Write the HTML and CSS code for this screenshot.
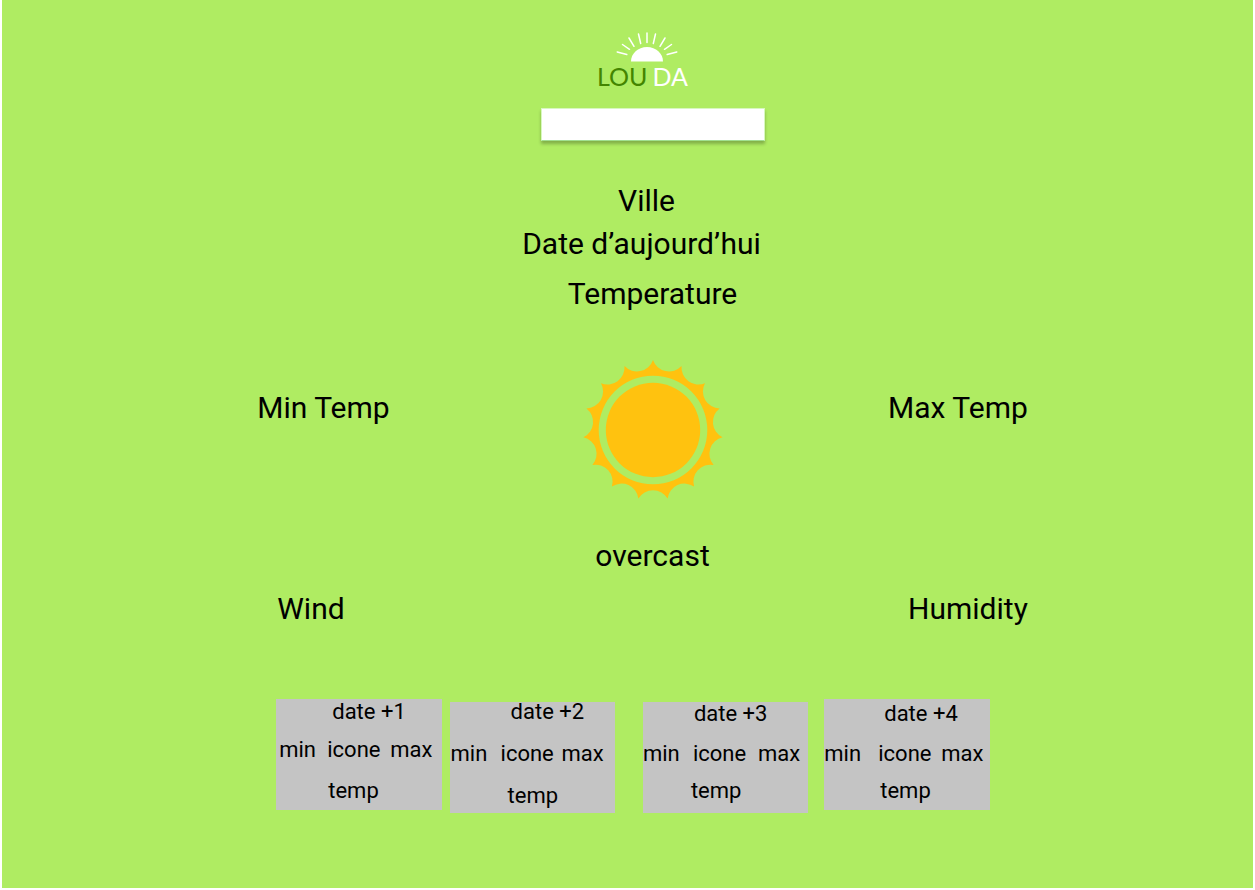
FILE: index.html
```html
<!DOCTYPE html>
<html lang="fr">
<head>
  <meta charset="utf-8">
  <meta name="viewport" content="width=device-width, initial-scale=1">
  <title>Louda</title>
  <link rel="stylesheet" href="styles.css">
</head>
<body>
  <main class="page">
    <header class="header">
      <div class="logo">
        <svg class="logo-sun" viewBox="0 0 62 30" aria-hidden="true">
          <path class="logo-disc" d="M15 29.5C15 21.5 22 15 31 15s16 6.500 16 14.500z"/>
          <path class="logo-rays" d="M31 1v9.500M22.500 2l2.200 9.500M39.500 2l-2.200 9.500M13 6l5 8.300M49 6l-5 8.300M6.500 12.500l7 4.800M55.500 12.500l-7 4.800M1.200 20l9.600 2.500M60.800 20l-9.600 2.500"/>
        </svg>
        <div class="logo-name"><span class="logo-dark">LOU</span><span class="logo-light">DA</span></div>
      </div>
      <input class="search" type="text" aria-label="Ville">
    </header>

    <section class="today">
      <h1 class="city">Ville</h1>
      <p class="date">Date d’aujourd’hui</p>
      <p class="temperature">Temperature</p>
    </section>

    <section class="conditions">
      <p class="min-temp">Min Temp</p>
      <svg class="sun" viewBox="-70 -70 140 140" aria-hidden="true">
        <path fill-rule="evenodd" d="M0-70A17 17 0 0 0 28.500-63.900A17 17 0 0 0 52-46.800A17 17 0 0 0 66.600-21.600A17 17 0 0 0 69.600 7.300A17 17 0 0 0 60.600 35A17 17 0 0 0 41.100 56.600A17 17 0 0 0 14.600 68.500A17 17 0 0 0-14.600 68.500A17 17 0 0 0-41.100 56.600A17 17 0 0 0-60.600 35A17 17 0 0 0-69.600 7.300A17 17 0 0 0-66.600-21.600A17 17 0 0 0-52-46.800A17 17 0 0 0-28.500-63.900A17 17 0 0 0 0-70zM-54.300 0A54.300 54.300 0 0 0 54.300 0A54.300 54.300 0 0 0-54.300 0z"/>
        <circle r="47.200"/>
      </svg>
      <p class="max-temp">Max Temp</p>
    </section>

    <p class="sky">overcast</p>

    <section class="air">
      <p>Wind</p>
      <p>Humidity</p>
    </section>

    <section class="forecast">
      <article class="day day-one">
        <h2 class="day-date">date +1</h2>
        <div class="day-row"><span>min</span><span>icone</span><span>max</span></div>
        <p class="day-temp">temp</p>
      </article>
      <article class="day day-two">
        <h2 class="day-date">date +2</h2>
        <div class="day-row"><span>min</span><span>icone</span><span>max</span></div>
        <p class="day-temp">temp</p>
      </article>
      <article class="day day-three">
        <h2 class="day-date">date +3</h2>
        <div class="day-row"><span>min</span><span>icone</span><span>max</span></div>
        <p class="day-temp">temp</p>
      </article>
      <article class="day day-four">
        <h2 class="day-date">date +4</h2>
        <div class="day-row"><span>min</span><span>icone</span><span>max</span></div>
        <p class="day-temp">temp</p>
      </article>
    </section>
  </main>
</body>
</html>
```
FILE: styles.css
```css
* {
  box-sizing: border-box;
}

body {
  margin: 0;
  padding: 0 2px 2px;
  background: #fff;
  color: #000;
  font: 400 30px/36px Roboto, sans-serif;
}

h1,
h2,
p {
  margin: 0;
  font: inherit;
}

.page {
  min-height: calc(100vh - 2px);
  padding: 32px 18% 48px 22%;
  background: #afec62;
}

.header,
.today {
  display: flex;
  flex-direction: column;
  align-items: center;
}

.logo {
  display: flex;
  flex-direction: column;
  align-items: center;
  padding-right: 12px;
}

.logo-sun {
  display: block;
  width: 62px;
  height: 30px;
}

.logo-disc {
  fill: #fff;
}

.logo-rays {
  fill: none;
  stroke: #fff;
  stroke-width: 1.5;
  stroke-linecap: round;
}

.logo-name {
  display: flex;
  gap: 5px;
  margin-right: 8px;
  font: 400 25px/28px Lato, sans-serif;
}

.logo-dark {
  color: #438500;
}

.logo-light {
  color: #fff;
}

.search {
  width: 224px;
  height: 33px;
  margin-top: 18px;
  padding: 0 8px;
  border: 1px solid #d8f8c0;
  border-bottom-color: #a0e090;
  border-radius: 0;
  background: #fff;
  box-shadow: 0 3px 3px rgba(0, 0, 0, 0.25);
  font: 400 16px/20px Roboto, sans-serif;
}

.today {
  margin-top: 42px;
}

.city {
  padding-right: 12px;
}

.date {
  margin-top: 7px;
  padding-right: 22px;
}

.temperature {
  margin-top: 14px;
}

.conditions {
  display: grid;
  grid-template-columns: 1fr 140px 1fr;
  margin-top: 48px;
}

.min-temp {
  margin: 30px 0 0 -20px;
}

.max-temp {
  margin-top: 30px;
  text-align: right;
}

.sun {
  display: block;
  width: 140px;
  height: 140px;
  fill: #ffc20f;
}

.sky {
  margin-top: 38px;
  text-align: center;
}

.air {
  display: flex;
  justify-content: space-between;
  margin-top: 17px;
}

.forecast {
  display: flex;
  align-items: flex-start;
  margin: 72px 0 0 -1px;
  font-size: 22px;
  line-height: 26px;
}

.day {
  flex: 0 0 22%;
  padding-bottom: 6px;
  background: #c4c4c4;
}

.day-row {
  display: grid;
}

.day-one .day-date {
  padding-left: 56px;
}

.day-one .day-row {
  grid-template-columns: 48px 63px auto;
  margin: 12px 0 15px;
  padding-left: 3px;
}

.day-one .day-temp {
  padding-left: 52px;
}

.day-two {
  margin: 3px 0 0 8px;
}

.day-two .day-date {
  margin-top: -3px;
  padding-left: 61px;
}

.day-two .day-row {
  grid-template-columns: 50px 61px auto;
  margin: 16px 0;
  padding-left: 1px;
}

.day-two .day-temp {
  padding-left: 58px;
}

.day-two,
.day-three {
  padding-bottom: 4px;
}

.day-three {
  margin: 3px 0 0 28px;
  padding-bottom: 9px;
}

.day-three .day-date {
  margin-top: -1px;
  padding-left: 51px;
}

.day-three .day-row {
  grid-template-columns: 50px 65px auto;
  margin: 14px 0 11px;
}

.day-three .day-temp {
  padding-left: 48px;
}

.day-four {
  margin-left: 16px;
}

.day-four .day-date {
  padding: 2px 0 0 60px;
}

.day-four .day-row {
  grid-template-columns: 54px 63px auto;
  margin: 14px 0 11px;
}

.day-four .day-temp {
  padding-left: 56px;
}
```
